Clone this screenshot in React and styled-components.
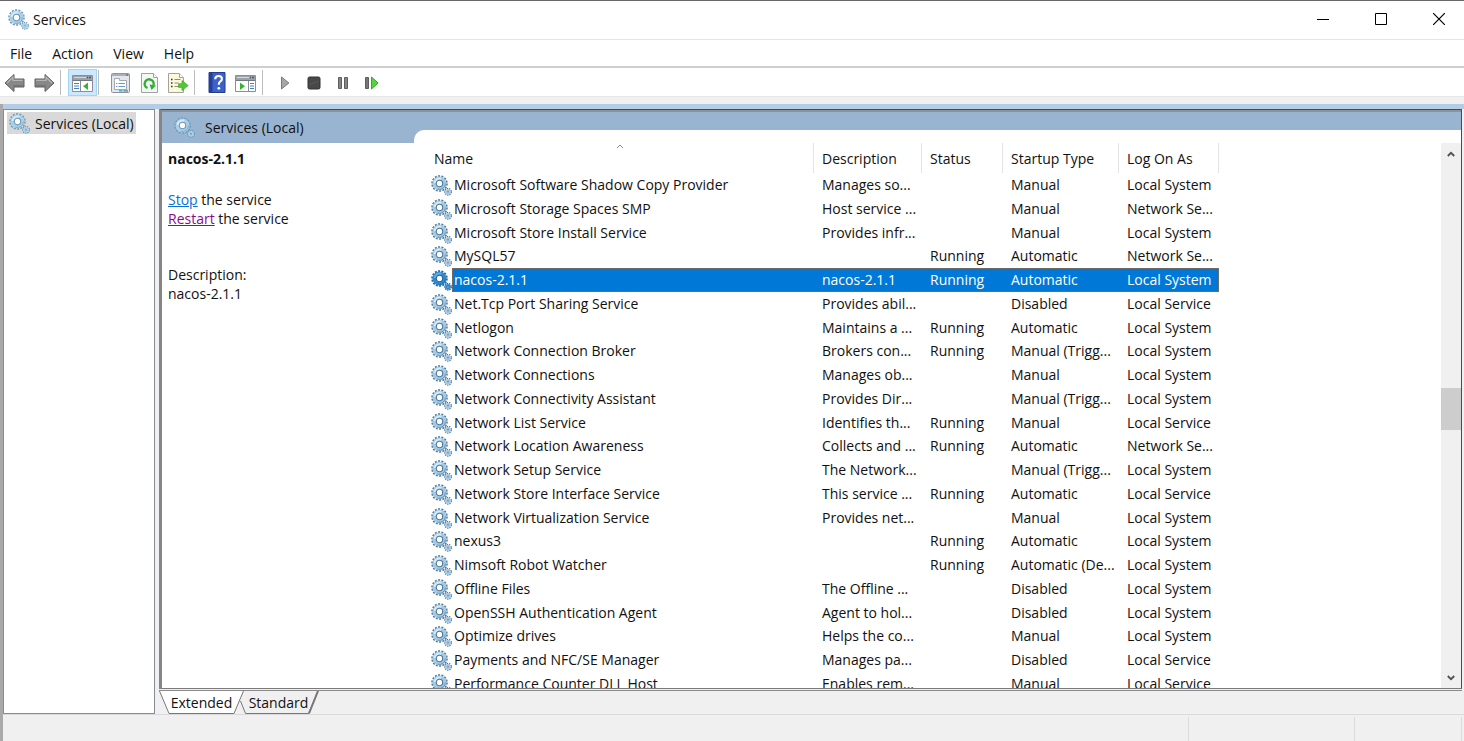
import React from "react";
import styled, { createGlobalStyle, css } from "styled-components";

const GlobalStyle = createGlobalStyle`
  *, *::before, *::after { box-sizing: border-box; }
  html, body { margin: 0; height: 100%; }
  body {
    font-family: "Open Sans", "Noto Sans", sans-serif;
    font-size: 14px;
    line-height: 19px;
    color: #111;
    background: #f0f0f0;
    overflow: hidden;
  }
  button { font: inherit; color: inherit; border: 0; padding: 0; background: none; }
`;

const Window = styled.div`
  display: flex;
  flex-direction: column;
  height: 100vh;
  border-top: 1px solid #6a6668;
`;

const TitleBar = styled.header`
  display: flex;
  align-items: center;
  height: 39px;
  padding: 0 0 2px 8px;
  background: #fff;
  border-bottom: 1px solid #e6e6e6;
`;

const Title = styled.h1`
  flex: 1;
  margin: 0 0 0 4px;
  font-size: 14px;
  font-weight: 400;
`;

const WindowButton = styled.button`
  display: flex;
  align-items: center;
  justify-content: center;
  width: 58px;
  height: 36px;
`;

const WindowButtons = styled.div`
  display: flex;
  margin-right: -4px;
`;

const MenuBar = styled.nav`
  display: flex;
  align-items: center;
  height: 28px;
  background: #fff;
  border-bottom: 2px solid #ccd0d2;
`;

const MenuItem = styled.button`
  padding: 0 10px;
`;

const ToolBar = styled.div`
  display: flex;
  align-items: center;
  height: 29px;
  padding-top: 1px;
  background: #fff;
  border-bottom: 1px solid #e6e6e6;
`;

const ToolGroup = styled.div`
  display: flex;
  padding-right: ${(p) => p.$gap || 0}px;
`;

const ToolButton = styled.button`
  display: flex;
  align-items: center;
  justify-content: center;
  width: 29px;
  height: 27px;
  ${(p) => p.$active && css`
    background: #cce8ff;
    border: 1px solid #a5d3f5;
  `}
`;

const ToolSeparator = styled.div`
  width: 1px;
  height: 25px;
  margin: 0 7px 0 0;
  background: #bcbcbc;
`;

const Frame = styled.div`
  display: flex;
  flex-direction: column;
  flex: 1;
  min-height: 0;
  margin-top: 7px;
  border-left: 3px solid #a9a9a9;
`;

const Workspace = styled.main`
  display: flex;
  flex: 1;
  min-height: 0;
  gap: 4px;
  padding-right: 2px;
  border-top: 5px solid #b4cde6;
`;

const TreePane = styled.aside`
  width: 152px;
  padding: 2px 3px;
  background: #fff;
  border: 1px solid #868b94;
`;

const TreeItem = styled.button`
  display: flex;
  align-items: center;
  gap: 5px;
  height: 22px;
  padding: 0 2px;
  background: #d9d9d9;
`;

const ResultPane = styled.section`
  display: flex;
  flex-direction: column;
  flex: 1;
  min-width: 0;
`;

const ResultView = styled.div`
  display: flex;
  flex: 1;
  min-height: 0;
  background: #99b4d1;
  border: 1px solid #4b4b4b;
  border-width: 1px 1px 1px 3px;
  border-left-color: #858585;
  border-bottom-color: #7a7a7a;
  box-shadow: inset 0 2px #8d9296;
`;

const DetailColumn = styled.div`
  display: flex;
  flex-direction: column;
  width: 252px;
`;

const PaneCaption = styled.h2`
  display: flex;
  align-items: center;
  gap: 10px;
  height: 33px;
  margin: 0;
  padding: 2px 0 0 12px;
  font-size: 14px;
  font-weight: 400;
`;

const Details = styled.div`
  flex: 1;
  padding: 6px 0 0 6px;
  background: #fff;
`;

const ServiceName = styled.h3`
  margin: 0 0 22px;
  font-size: 14px;
  font-weight: 700;
`;

const Paragraph = styled.p`
  margin: 0 0 37px;
`;

const TaskLink = styled.a`
  color: ${(p) => (p.$visited ? "#8b0a8f" : "#0a6fd6")};
  text-decoration: underline;
`;

const ListColumn = styled.div`
  display: flex;
  flex: 1;
  min-width: 0;
  margin-top: 20px;
  padding: 13px 0 0 15px;
  background: #fff;
  border-top-left-radius: 10px;
`;

const ListViewport = styled.div`
  flex: 1;
  min-width: 0;
  overflow: hidden;
`;

const Table = styled.table`
  width: 790px;
  table-layout: fixed;
  border-collapse: separate;
  border-spacing: 0;
`;

const HeaderCell = styled.th`
  position: relative;
  height: 30px;
  padding: 0 0 0 ${(p) => (p.$first ? 5 : 8)}px;
  font-weight: 400;
  text-align: left;
  border-right: 1px solid #e5e5e5;
`;

const SortMark = styled.svg`
  position: absolute;
  top: 1px;
  left: 50%;
  margin-left: -5px;
`;

const Row = styled.tr`
  height: 24px;
  &:nth-child(4n) { height: 23px; }
  ${(p) => p.$selected && css`color: #fff;`}
`;

const Cell = styled.td`
  padding: 0 0 2px 8px;
  white-space: nowrap;
  overflow: hidden;
  ${(p) => p.$selected && css`
    background: #0078d7;
    border-top: 1px solid #6f6a66;
    border-bottom: 1px solid #6f6a66;
    &:last-child { border-right: 1px solid #6f6a66; }
  `}
`;

const NameCell = styled.td`
  padding: 0 0 0 2px;
  white-space: nowrap;
`;

const NameContent = styled.div`
  display: flex;
  align-items: center;
`;

const NameLabel = styled.span`
  flex: 1;
  padding: 1px 0 3px 2px;
  ${(p) => p.$selected && css`
    background: #0078d7;
    border: 1px solid #6f6a66;
    border-right: 0;
    padding: 1px 0 2px 1px;
    height: 24px;
  `}
`;

const ScrollBar = styled.div`
  display: flex;
  flex-direction: column;
  width: 20px;
  background: #f0f0f0;
`;

const ScrollButton = styled.button`
  display: flex;
  align-items: center;
  justify-content: center;
  height: 21px;
`;

const ScrollTrack = styled.div`
  display: flex;
  flex-direction: column;
  flex: 1;
`;

const TrackSpace = styled.div`
  flex: ${(p) => p.$share};
`;

const Thumb = styled.div`
  height: 42px;
  background: #cdcdcd;
`;

const TabStrip = styled.div`
  display: flex;
  height: 24px;
  margin-top: 1px;
  border-top: 1px solid #8a8a8a;
`;

const Tab = styled.button`
  position: relative;
  width: ${(p) => p.$width}px;
  height: 23px;
  margin-left: ${(p) => (p.$overlap ? -6 : 0)}px;
  z-index: ${(p) => (p.$overlap ? 0 : 1)};
`;

const TabShape = styled.svg`
  position: absolute;
  inset: 0;
`;

const TabText = styled.span`
  position: relative;
`;

const StatusBar = styled.footer`
  display: flex;
  height: 27px;
  padding: 2px 2px 0 0;
  border-top: 1px solid #dadada;
`;

const StatusPart = styled.div`
  flex: ${(p) => (p.$width ? `0 0 ${p.$width}px` : 1)};
  border-right: 1px solid #dcdcdc;
`;

function Gears({ selected, soft }) {
  const body = selected ? "#3489cc" : soft ? "#a9d0ea" : "#a3c9e4";
  const edge = selected ? "#1766a8" : soft ? "#7097b6" : "#4f7899";
  const light = selected ? "#69aee2" : "#d5ebf8";
  return (
    <svg width="21" height="21" viewBox="0 0 21 21" fill="none" aria-hidden="true">
      <circle cx="8.5" cy="8.5" r="7.4" stroke={edge} strokeWidth="1.8" strokeDasharray="2 1.321" />
      <circle cx="8.5" cy="8.5" r="5" stroke={body} strokeWidth="4" />
      <path d="M3.6 8a5 5 0 0 1 6.7-4.200" stroke={light} strokeWidth="2" />
      <circle cx="8.5" cy="8.5" r="3.200" fill="#fff" stroke={edge} strokeWidth="1.1" />
      <path d="M14.4 8.500a6 6 0 0 1-8 5.600" stroke={edge} strokeWidth=".9" opacity=".7" />
      <circle cx="17" cy="16.800" r="3.300" stroke={edge} strokeWidth="1.300" strokeDasharray="1.400 .904" />
      <circle cx="17" cy="16.800" r="1.900" stroke={body} strokeWidth="2" />
      <circle cx="17" cy="16.800" r="1" fill={edge} opacity=".75" />
    </svg>
  );
}

function ArrowIcon({ right }) {
  return (
    <svg width="22" height="20" viewBox="0 0 22 20" aria-hidden="true">
      <g transform={right ? "translate(22 0) scale(-1 1)" : undefined}>
        <path d="M1 10 10 1.5V6h10v8H10v4.5z" fill="#888" stroke="#5e5e5e" strokeLinejoin="round" />
        <path d="M3 10 9 4.2V7.3h9.8" fill="none" stroke="#b5b5b5" strokeWidth="1.2" />
        <path d="M9 12.8h9.8" stroke="#6d6d6d" />
      </g>
    </svg>
  );
}

function ConsoleIcon({ flipped }) {
  return (
    <svg width="21" height="18" viewBox="0 0 21 18" aria-hidden="true">
      <path d="M.5 1.5h20v16H.5z" fill="#fff" stroke="#8b8f95" />
      <path d="M1 2h19v5H1z" fill="#9ba1a9" />
      <path d="M2 3.5h12" stroke="#d5d9dd" />
      <path d="M15 3.5h1m1 0h2" stroke="#4f565e" strokeWidth="1.4" />
      <path d="M1 6.5h19" stroke="#717881" />
      {flipped ? (
        <>
          <path d="M13.5 7v10" stroke="#8b8f95" />
          <path d="M15 9.5h4m-4 2.5h4m-4 2.5h4" stroke="#3c82c6" strokeWidth="1.2" />
          <path d="m5 8.5 5 3.7-5 3.8z" fill="#35b52b" />
        </>
      ) : (
        <>
          <path d="M8.5 7v10" stroke="#8b8f95" />
          <path d="M2 9.5h5M2 12h5m-5 2.5h5" stroke="#3c82c6" strokeWidth="1.2" />
          <path d="m16 8.5-5 3.7 5 3.8z" fill="#35b52b" />
        </>
      )}
    </svg>
  );
}

function PropertiesIcon() {
  return (
    <svg width="19" height="20" viewBox="0 0 19 20" aria-hidden="true">
      <rect x=".5" y=".5" width="18" height="19" rx="1" fill="#e4e7ea" stroke="#8e949b" />
      <path d="M1 2h17" stroke="#aab0b8" strokeWidth="2" />
      <path d="M15 2h2" stroke="#555c66" strokeWidth="1.2" />
      <path d="M3.5 7.5v-2h5v2h7v9h-12z" fill="#fff" stroke="#a0a9b3" />
      <path d="M5 10.5h1.5m1 0H14M5 13.5h1.5m1 0H14" stroke="#6a9dc4" />
      <path d="M8 17.8h3.5" stroke="#2fc4f0" strokeWidth="1.8" />
      <path d="M12.5 17.8H17" stroke="#8e949b" strokeWidth="1.8" />
    </svg>
  );
}

function RefreshIcon() {
  return (
    <svg width="17" height="20" viewBox="0 0 17 20" aria-hidden="true">
      <path d="M.5.5h12l4 4v15H.5z" fill="#f5f7f5" stroke="#9da2a5" />
      <path d="M12.5.5v4h4" fill="#fff" stroke="#9da2a5" />
      <path d="M6.500 15A4.500 4.500 0 1 1 12.500 12" fill="none" stroke="#32ad35" strokeWidth="2.400" />
      <path d="m8.500 11.500 6.500 1-4.500 4.500z" fill="#32ad35" />
    </svg>
  );
}

function ExportIcon() {
  return (
    <svg width="21" height="20" viewBox="0 0 21 20" aria-hidden="true">
      <path d="M.5.5h11l4 4v15H.5z" fill="#fdf7dc" stroke="#a5a299" />
      <path d="M11.5.5v4h4" fill="#fff" stroke="#a5a299" />
      <path d="M3 6.5h1.5M3 10h1.5M3 13.5h1.5" stroke="#333" strokeWidth="1.4" />
      <path d="M6.5 6.5h6m-6 3.5h4m-4 3.5h4" stroke="#8e8c86" />
      <path d="M10.5 10.8H14V7.6l6.2 5-6.2 5v-3.2h-3.5z" fill="#55c639" stroke="#3cac27" strokeWidth=".7" />
    </svg>
  );
}

function HelpIcon() {
  return (
    <svg width="18" height="21" viewBox="0 0 18 21" aria-hidden="true">
      <path d="M1 .5h16v20H1z" fill="#3b61cc" stroke="#243d91" />
      <path d="M1 1h3.5v19H1z" fill="#243f9b" />
      <path d="M7.2 7.2Q7.4 4 10.7 4q3.2 0 3.2 2.9 0 1.6-1.8 2.8-1.3.9-1.3 3.1" fill="none" stroke="#fff" strokeWidth="2.1" />
      <circle cx="10.8" cy="16.3" r="1.4" fill="#fff" />
    </svg>
  );
}

function PlayIcon() {
  return (
    <svg width="10" height="14" viewBox="0 0 10 14" aria-hidden="true">
      <path d="M1.5 1v12l7.4-6z" fill="#a6a6a6" stroke="#7b7b7b" strokeLinejoin="round" />
    </svg>
  );
}

function StopIcon() {
  return (
    <svg width="14" height="14" viewBox="0 0 14 14" aria-hidden="true">
      <rect x="1" y="1" width="12" height="12" rx="1.5" fill="#484848" stroke="#333" />
      <path d="M2 8.5 12 5" stroke="#545454" strokeWidth="1.4" />
    </svg>
  );
}

function PauseIcon() {
  return (
    <svg width="12" height="14" viewBox="0 0 12 14" aria-hidden="true">
      <path d="M1.5 1.5h3v11h-3zM7.5 1.5h3v11h-3z" fill="#858585" stroke="#5e5e5e" />
    </svg>
  );
}

function RestartIcon() {
  return (
    <svg width="15" height="14" viewBox="0 0 15 14" aria-hidden="true">
      <path d="M1.5 1.5h3v11h-3z" fill="#777" stroke="#5e5e5e" />
      <path d="M7.5 1v12l6.6-6z" fill="#55d43e" stroke="#2eab22" strokeLinejoin="round" />
    </svg>
  );
}

function Chevron({ down }) {
  return (
    <svg width="8" height="6" viewBox="0 0 8 6" aria-hidden="true">
      <path d={down ? "M.8 1 4 4.2 7.2 1" : "M.8 5 4 1.8 7.2 5"} fill="none" stroke="#505050" strokeWidth="1.8" />
    </svg>
  );
}

const services = [
  ["Microsoft Software Shadow Copy Provider", "Manages so...", "", "Manual", "Local System"],
  ["Microsoft Storage Spaces SMP", "Host service ...", "", "Manual", "Network Se..."],
  ["Microsoft Store Install Service", "Provides infr...", "", "Manual", "Local System"],
  ["MySQL57", "", "Running", "Automatic", "Network Se..."],
  ["nacos-2.1.1", "nacos-2.1.1", "Running", "Automatic", "Local System"],
  ["Net.Tcp Port Sharing Service", "Provides abil...", "", "Disabled", "Local Service"],
  ["Netlogon", "Maintains a ...", "Running", "Automatic", "Local System"],
  ["Network Connection Broker", "Brokers con...", "Running", "Manual (Trigg...", "Local System"],
  ["Network Connections", "Manages ob...", "", "Manual", "Local System"],
  ["Network Connectivity Assistant", "Provides Dir...", "", "Manual (Trigg...", "Local System"],
  ["Network List Service", "Identifies th...", "Running", "Manual", "Local Service"],
  ["Network Location Awareness", "Collects and ...", "Running", "Automatic", "Network Se..."],
  ["Network Setup Service", "The Network...", "", "Manual (Trigg...", "Local System"],
  ["Network Store Interface Service", "This service ...", "Running", "Automatic", "Local Service"],
  ["Network Virtualization Service", "Provides net...", "", "Manual", "Local System"],
  ["nexus3", "", "Running", "Automatic", "Local System"],
  ["Nimsoft Robot Watcher", "", "Running", "Automatic (De...", "Local System"],
  ["Offline Files", "The Offline ...", "", "Disabled", "Local System"],
  ["OpenSSH Authentication Agent", "Agent to hol...", "", "Disabled", "Local System"],
  ["Optimize drives", "Helps the co...", "", "Manual", "Local System"],
  ["Payments and NFC/SE Manager", "Manages pa...", "", "Disabled", "Local Service"],
  ["Performance Counter DLL Host", "Enables rem...", "", "Manual", "Local Service"],
];

const selectedService = "nacos-2.1.1";

const Column = styled.col`
  width: ${(p) => p.$width}px;
`;

function ServiceTable() {
  return (
    <Table>
      <colgroup>
        {[385, 108, 81, 116, 100].map((width) => (
          <Column key={width} $width={width} />
        ))}
      </colgroup>
      <thead>
        <tr>
          <HeaderCell $first scope="col">
            Name
            <SortMark width="8" height="5" viewBox="0 0 8 5" aria-hidden="true">
              <path d="M1 4 4 1l3 3" fill="none" stroke="#8a8a8a" />
            </SortMark>
          </HeaderCell>
          {["Description", "Status", "Startup Type", "Log On As"].map((label) => (
            <HeaderCell key={label} scope="col">{label}</HeaderCell>
          ))}
        </tr>
      </thead>
      <tbody>
        {services.map(([name, ...rest]) => {
          const selected = name === selectedService;
          return (
            <Row key={name} $selected={selected} aria-selected={selected}>
              <NameCell>
                <NameContent>
                  <Gears selected={selected} />
                  <NameLabel $selected={selected}>{name}</NameLabel>
                </NameContent>
              </NameCell>
              {rest.map((value, i) => (
                <Cell key={i} $selected={selected}>{value}</Cell>
              ))}
            </Row>
          );
        })}
      </tbody>
    </Table>
  );
}

export default function App() {
  return (
    <>
      <GlobalStyle />
      <Window>
        <TitleBar>
          <Gears soft />
          <Title>Services</Title>
          <WindowButtons>
            <WindowButton aria-label="Minimize">
              <svg width="12" height="12" viewBox="0 0 12 12"><path d="M0 6.5h12" stroke="#000" /></svg>
            </WindowButton>
            <WindowButton aria-label="Maximize">
              <svg width="12" height="12" viewBox="0 0 12 12"><path d="M.5.5h11v11H.5z" fill="none" stroke="#000" /></svg>
            </WindowButton>
            <WindowButton aria-label="Close">
              <svg width="12" height="12" viewBox="0 0 12 12"><path d="m0 0 12 12M12 0 0 12" stroke="#000" strokeWidth="1.2" /></svg>
            </WindowButton>
          </WindowButtons>
        </TitleBar>
        <MenuBar>
          {["File", "Action", "View", "Help"].map((label) => (
            <MenuItem key={label}>{label}</MenuItem>
          ))}
        </MenuBar>
        <ToolBar role="toolbar">
          <ToolGroup $gap={2}>
            <ToolButton aria-label="Back"><ArrowIcon /></ToolButton>
            <ToolButton aria-label="Forward"><ArrowIcon right /></ToolButton>
          </ToolGroup>
          <ToolSeparator />
          <ToolGroup $gap={1}>
            <ToolButton $active aria-label="Show console tree"><ConsoleIcon /></ToolButton>
          </ToolGroup>
          <ToolSeparator />
          <ToolGroup $gap={1}>
            <ToolButton aria-label="Properties"><PropertiesIcon /></ToolButton>
            <ToolButton aria-label="Refresh"><RefreshIcon /></ToolButton>
            <ToolButton aria-label="Export list"><ExportIcon /></ToolButton>
          </ToolGroup>
          <ToolSeparator />
          <ToolGroup $gap={2}>
            <ToolButton aria-label="Help topics"><HelpIcon /></ToolButton>
            <ToolButton aria-label="Show action pane"><ConsoleIcon flipped /></ToolButton>
          </ToolGroup>
          <ToolSeparator />
          <ToolGroup>
            <ToolButton aria-label="Start service"><PlayIcon /></ToolButton>
            <ToolButton aria-label="Stop service"><StopIcon /></ToolButton>
            <ToolButton aria-label="Pause service"><PauseIcon /></ToolButton>
            <ToolButton aria-label="Restart service"><RestartIcon /></ToolButton>
          </ToolGroup>
        </ToolBar>
        <Frame>
          <Workspace>
            <TreePane>
              <TreeItem><Gears soft />Services (Local)</TreeItem>
            </TreePane>
            <ResultPane>
              <ResultView>
                <DetailColumn>
                  <PaneCaption><Gears soft />Services (Local)</PaneCaption>
                  <Details>
                    <ServiceName>nacos-2.1.1</ServiceName>
                    <Paragraph>
                      <TaskLink href="#stop">Stop</TaskLink> the service<br />
                      <TaskLink href="#restart" $visited>Restart</TaskLink> the service
                    </Paragraph>
                    <Paragraph>Description:<br />nacos-2.1.1</Paragraph>
                  </Details>
                </DetailColumn>
                <ListColumn>
                  <ListViewport><ServiceTable /></ListViewport>
                  <ScrollBar>
                    <ScrollButton aria-label="Scroll up"><Chevron /></ScrollButton>
                    <ScrollTrack>
                      <TrackSpace $share={224} />
                      <Thumb />
                      <TrackSpace $share={238} />
                    </ScrollTrack>
                    <ScrollButton aria-label="Scroll down"><Chevron down /></ScrollButton>
                  </ScrollBar>
                </ListColumn>
              </ResultView>
              <TabStrip>
                <Tab $width={85}>
                  <TabShape width="85" height="23" viewBox="0 0 85 23" aria-hidden="true">
                    <path d="M.5-1 10 22.500h65L84.500-1z" fill="#fff" />
                    <path d="M.5 0 10 22.500h65L84.500 0" fill="none" stroke="#777" />
                  </TabShape>
                  <TabText>Extended</TabText>
                </Tab>
                <Tab $width={81} $overlap>
                  <TabShape width="81" height="23" viewBox="0 0 81 23" aria-hidden="true">
                    <path d="m2.500 10 5 12.500h63L80 0" fill="#f0f0f0" stroke="#777" />
                    <path d="m71 22.500 9-22.500" stroke="#777" strokeWidth="2" />
                  </TabShape>
                  <TabText>Standard</TabText>
                </Tab>
              </TabStrip>
            </ResultPane>
          </Workspace>
          <StatusBar>
            <StatusPart />
            <StatusPart $width={166} />
            <StatusPart $width={107} />
          </StatusBar>
        </Frame>
      </Window>
    </>
  );
}
